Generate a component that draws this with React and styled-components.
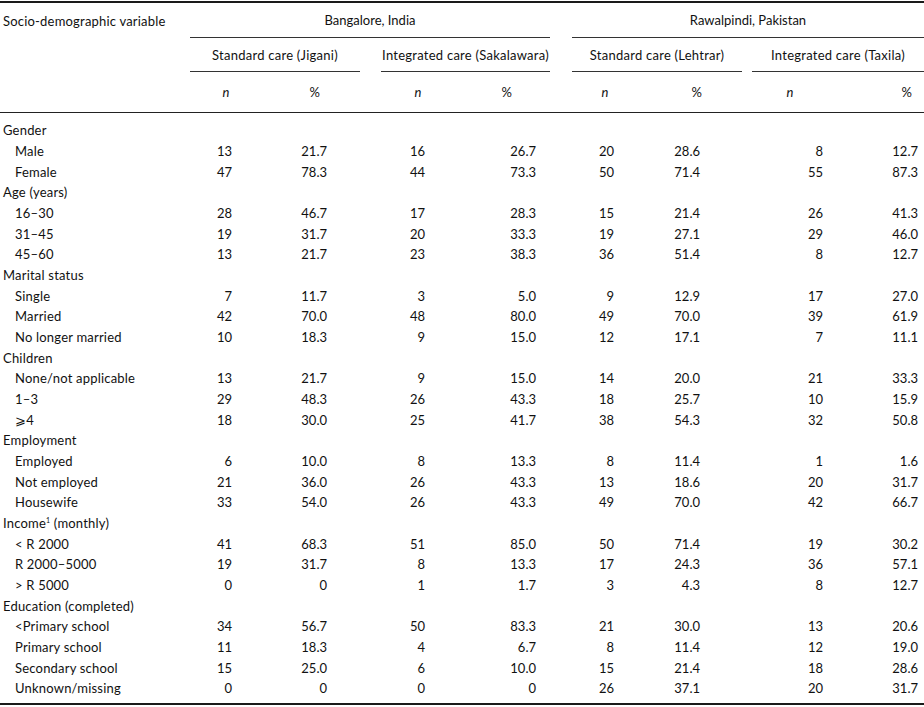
import React, { Fragment } from 'react';
import styled, { createGlobalStyle } from 'styled-components';

const GlobalStyle = createGlobalStyle`
    html, body {
        margin: 0;
        padding: 0;
        background: #ffffff;
    }
    body {
        font-family: 'Lato', 'Open Sans', sans-serif;
        font-size: 13px;
        color: #111111;
    }
`;

// column layout: label | group | gap | group | gap | group | gap | group
const COLS = '190px 170px 21px 169px 22px 170px 10px 172px';

const GROUPS = [
    { label: 'Standard care (Jigani)', col: 2, data: [42, 95], head: [39.5, 90.5] },
    { label: 'Integrated care (Sakalawara)', col: 4, data: [44, 111], head: [40.5, 90.5] },
    { label: 'Standard care (Lehtrar)', col: 6, data: [42, 86], head: [36.5, 93.5] },
    { label: 'Integrated care (Taxila)', col: 8, data: [71, 95], head: [41.5, 118.5] },
];

const ROWS = [
    { cat: 'Gender' },
    ['Male', 13, '21.7', 16, '26.7', 20, '28.6', 8, '12.7'],
    ['Female', 47, '78.3', 44, '73.3', 50, '71.4', 55, '87.3'],
    { cat: 'Age (years)' },
    ['16–30', 28, '46.7', 17, '28.3', 15, '21.4', 26, '41.3'],
    ['31–45', 19, '31.7', 20, '33.3', 19, '27.1', 29, '46.0'],
    ['45–60', 13, '21.7', 23, '38.3', 36, '51.4', 8, '12.7'],
    { cat: 'Marital status' },
    ['Single', 7, '11.7', 3, '5.0', 9, '12.9', 17, '27.0'],
    ['Married', 42, '70.0', 48, '80.0', 49, '70.0', 39, '61.9'],
    ['No longer married', 10, '18.3', 9, '15.0', 12, '17.1', 7, '11.1'],
    { cat: 'Children' },
    ['None/not applicable', 13, '21.7', 9, '15.0', 14, '20.0', 21, '33.3'],
    ['1–3', 29, '48.3', 26, '43.3', 18, '25.7', 10, '15.9'],
    ['⩾4', 18, '30.0', 25, '41.7', 38, '54.3', 32, '50.8'],
    { cat: 'Employment' },
    ['Employed', 6, '10.0', 8, '13.3', 8, '11.4', 1, '1.6'],
    ['Not employed', 21, '36.0', 26, '43.3', 13, '18.6', 20, '31.7'],
    ['Housewife', 33, '54.0', 26, '43.3', 49, '70.0', 42, '66.7'],
    { cat: 'Income', sup: '1', rest: ' (monthly)' },
    ['< R 2000', 41, '68.3', 51, '85.0', 50, '71.4', 19, '30.2'],
    ['R 2000–5000', 19, '31.7', 8, '13.3', 17, '24.3', 36, '57.1'],
    ['> R 5000', 0, '0', 1, '1.7', 3, '4.3', 8, '12.7'],
    { cat: 'Education (completed)' },
    ['<Primary school', 34, '56.7', 50, '83.3', 21, '30.0', 13, '20.6'],
    ['Primary school', 11, '18.3', 4, '6.7', 8, '11.4', 12, '19.0'],
    ['Secondary school', 15, '25.0', 6, '10.0', 15, '21.4', 18, '28.6'],
    ['Unknown/missing', 0, '0', 0, '0', 26, '37.1', 20, '31.7'],
];

const App = () => {
    return (
        <Fragment>
            <GlobalStyle />
            <Table>
                <Head>
                    <HeadRow $height={35}>
                        <HeadLabel>Socio-demographic variable</HeadLabel>
                        <Region $col="2 / span 3">Bangalore, India</Region>
                        <Region $col="6 / span 3">Rawalpindi, Pakistan</Region>
                    </HeadRow>
                    <HeadRow $height={34}>
                        {GROUPS.map((g) => (
                            <Group key={g.label} $col={g.col}>{g.label}</Group>
                        ))}
                    </HeadRow>
                    <HeadRow $height={40}>
                        {GROUPS.map((g) => (
                            <Pair key={g.label} $col={g.col} $widths={g.head}>
                                <Italic>n</Italic>
                                <span>%</span>
                            </Pair>
                        ))}
                    </HeadRow>
                </Head>
                <Body>
                    {ROWS.map((r, i) =>
                        r.cat ? (
                            <Row key={i}>
                                <Category>
                                    {r.cat}
                                    {r.sup && <Sup>{r.sup}</Sup>}
                                    {r.rest}
                                </Category>
                            </Row>
                        ) : (
                            <Row key={i}>
                                <Item>{r[0]}</Item>
                                {GROUPS.map((g, k) => (
                                    <Pair key={g.label} $col={g.col} $widths={g.data}>
                                        <span>{r[1 + k * 2]}</span>
                                        <span>{r[2 + k * 2]}</span>
                                    </Pair>
                                ))}
                            </Row>
                        )
                    )}
                </Body>
            </Table>
        </Fragment>
    );
};

export const Table = styled.div`
    width: 924px;
    margin-top: 1px;
    border-top: 2px solid #1a1a1a;
    border-bottom: 2px solid #1a1a1a;
`;

export const Head = styled.div`
    border-bottom: 1px solid #222222;
`;

export const HeadRow = styled.div`
    display: grid;
    grid-template-columns: ${COLS};
    height: ${(p) => p.$height}px;
    align-items: center;
`;

export const HeadLabel = styled.div`
    grid-column: 1;
    padding-left: 3px;
    align-self: stretch;
    display: flex;
    align-items: center;
    letter-spacing: 0.2px;
    white-space: nowrap;
`;

export const Region = styled.div`
    grid-column: ${(p) => p.$col};
    align-self: stretch;
    display: flex;
    align-items: center;
    justify-content: center;
    border-bottom: 1px solid #333333;
`;

export const Group = styled.div`
    grid-column: ${(p) => p.$col};
    align-self: stretch;
    display: flex;
    align-items: center;
    justify-content: center;
    letter-spacing: 0.25px;
    white-space: nowrap;
    border-bottom: 1px solid #333333;
`;

export const Pair = styled.div`
    grid-column: ${(p) => p.$col};
    display: grid;
    grid-template-columns: ${(p) => `${p.$widths[0]}px ${p.$widths[1]}px`};
    justify-items: end;
`;

export const Italic = styled.span`
    font-style: italic;
`;

export const Body = styled.div`
    padding: 7px 0 4px;
`;

export const Row = styled.div`
    display: grid;
    grid-template-columns: ${COLS};
    height: 20.68px;
    align-items: center;
`;

export const Category = styled.div`
    grid-column: 1 / span 3;
    padding-left: 3px;
    letter-spacing: 0.2px;
    white-space: nowrap;
`;

export const Item = styled.div`
    grid-column: 1;
    padding-left: 15px;
    letter-spacing: 0.2px;
    white-space: nowrap;
`;

export const Sup = styled.sup`
    font-size: 7px;
    line-height: 0;
    vertical-align: 5px;
`;

export default App;
